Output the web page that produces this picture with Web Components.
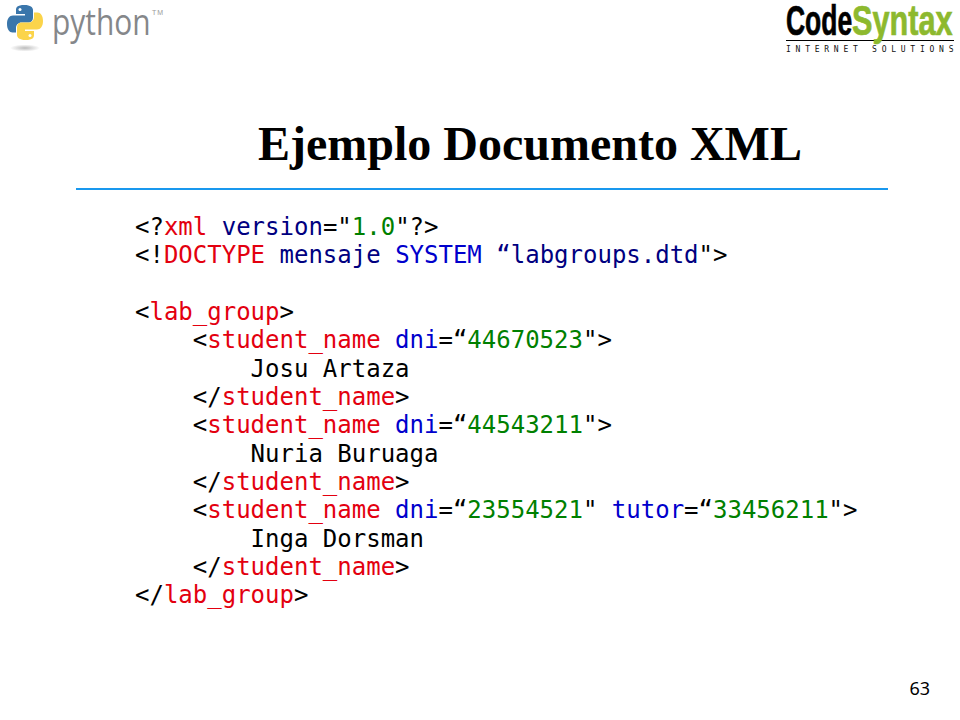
<!DOCTYPE html>
<html>
<head>
<meta charset="utf-8">
<style>
  html, body { margin: 0; background: #fff; }
</style>
</head>
<body>
<slide-page>
  <slide-header slot="header"></slide-header>
  <span slot="title">Ejemplo Documento XML</span>
  <xml-listing></xml-listing>
  <span slot="number">63</span>
</slide-page>

<script>
class SlidePage extends HTMLElement {
  constructor() {
    super();
    this.attachShadow({ mode: 'open' });
    this.shadowRoot.innerHTML = `
      <style>
        :host { display: flex; flex-direction: column; width: 960px; height: 720px; overflow: hidden; background: #fff; }
        h1 {
          margin: 57px 0 0 258px; font: bold 48px/62px "Liberation Serif", serif; color: #000;
        }
        hr { margin: 13px 72px 0 76px; height: 2px; border: 0; background: #1998ee; flex: none; }
        .body { flex: 1; padding: 23px 0 0 135px; }
        footer { padding: 0 30px 21px 0; text-align: right; font: 18px/22px "Noto Sans", sans-serif; color: #000; }
      </style>
      <slot name="header"></slot>
      <h1><slot name="title"></slot></h1>
      <hr>
      <div class="body"><slot></slot></div>
      <footer><slot name="number"></slot></footer>
    `;
  }
}

class SlideHeader extends HTMLElement {
  constructor() {
    super();
    this.attachShadow({ mode: 'open' });
    this.shadowRoot.innerHTML = `
      <style>
        :host { display: flex; justify-content: space-between; height: 56px; flex: none; }
        .py { display: flex; align-items: flex-start; padding: 3px 0 0 7px; }
        .py svg { display: block; flex: none; }
        .word { display: block; width: 96px; margin: 4px 0 0 9px; font: 400 36px/30px "Open Sans", sans-serif; color: #85878a; transform: scaleX(.83); transform-origin: left; }
        .tm { font: 7px/10px "Liberation Sans", sans-serif; color: #9a9a9a; margin: 5px 0 0 4px; letter-spacing: 1px; }
        .cs { width: 168px; margin-right: 6px; padding-top: 2px; }
        .name { display: flex; height: 38px; font: bold 42px/38px "Liberation Sans", sans-serif; -webkit-text-stroke: .7px currentColor; white-space: nowrap; }
        .name span { display: block; transform-origin: left; }
        .code { width: 66px; color: #000; transform: scaleX(.63); }
        .syntax { width: 102px; color: #8db92e; transform: scaleX(.73); }
        .sub { border-top: 1px solid #000; font: 8px/10px "DejaVu Sans Mono", monospace; letter-spacing: 4.75px; white-space: nowrap; color: #111; padding-top: 4px; }
      </style>
      <div class="py">
        <svg width="36" height="50" viewBox="0 0 36 50">
          <defs>
            <radialGradient id="sh"><stop offset="0" stop-color="#bbb"/><stop offset="1" stop-color="#fff"/></radialGradient>
          </defs>
          <ellipse cx="18" cy="45" rx="15" ry="3.5" fill="url(#sh)"/>
          <path fill="#3a76ab" d="M17.500 2C10 2 9 4.500 9 7v4h9v1.500H6C2.500 12.500 0 15.500 0 21s2.500 8.500 5.500 8.500H9v-4.700c0-3 2.500-5.300 5.500-5.300h7c2.500 0 4.500-2 4.500-4.500V7c0-2.500-2.500-5-8.500-5z"/>
          <circle cx="13" cy="6.500" r="1.500" fill="#fff"/>
          <path fill="#fbd44a" d="M18.500 37c7.500 0 8.500-2.500 8.500-5v-4h-9v-1.500h12c3.500 0 6-3 6-8.500s-2.500-8.500-5.500-8.500H27v4.700c0 3-2.500 5.300-5.500 5.300h-7C12 19.500 10 21.500 10 24v8c0 2.500 2.500 5 8.500 5z"/>
          <circle cx="23" cy="32.500" r="1.500" fill="#fff"/>
        </svg>
        <span class="word">python</span>
        <span class="tm">TM</span>
      </div>
      <div class="cs">
        <div class="name"><span class="code">Code</span><span class="syntax">Syntax</span></div>
        <div class="sub">INTERNET SOLUTIONS</div>
      </div>
    `;
  }
}

class XmlListing extends HTMLElement {
  constructor() {
    super();
    this.attachShadow({ mode: 'open' });
    this.shadowRoot.innerHTML = `
      <style>
        :host { display: block; }
        pre { margin: 0; font: 24px/28.35px "DejaVu Sans Mono", monospace; color: #000; }
        .t { color: #e3000f; }
        .a { color: #0000cc; }
        .n { color: #000080; }
        .v { color: #008000; }
      </style>
      <pre>&lt;?<span class="t">xml</span> <span class="n">version</span>="<span class="v">1.0</span>"?&gt;
&lt;!<span class="t">DOCTYPE</span> <span class="n">mensaje</span> <span class="a">SYSTEM</span> <span class="n">“labgroups.dtd</span>"&gt;

&lt;<span class="t">lab_group</span>&gt;
    &lt;<span class="t">student_name</span> <span class="a">dni</span>=“<span class="v">44670523</span>"&gt;
        Josu Artaza
    &lt;/<span class="t">student_name</span>&gt;
    &lt;<span class="t">student_name</span> <span class="a">dni</span>=“<span class="v">44543211</span>"&gt;
        Nuria Buruaga
    &lt;/<span class="t">student_name</span>&gt;
    &lt;<span class="t">student_name</span> <span class="a">dni</span>=“<span class="v">23554521</span>" <span class="a">tutor</span>=“<span class="v">33456211</span>"&gt;
        Inga Dorsman
    &lt;/<span class="t">student_name</span>&gt;
&lt;/<span class="t">lab_group</span>&gt;</pre>
    `;
  }
}

customElements.define('slide-page', SlidePage);
customElements.define('slide-header', SlideHeader);
customElements.define('xml-listing', XmlListing);
</script>
</body>
</html>
